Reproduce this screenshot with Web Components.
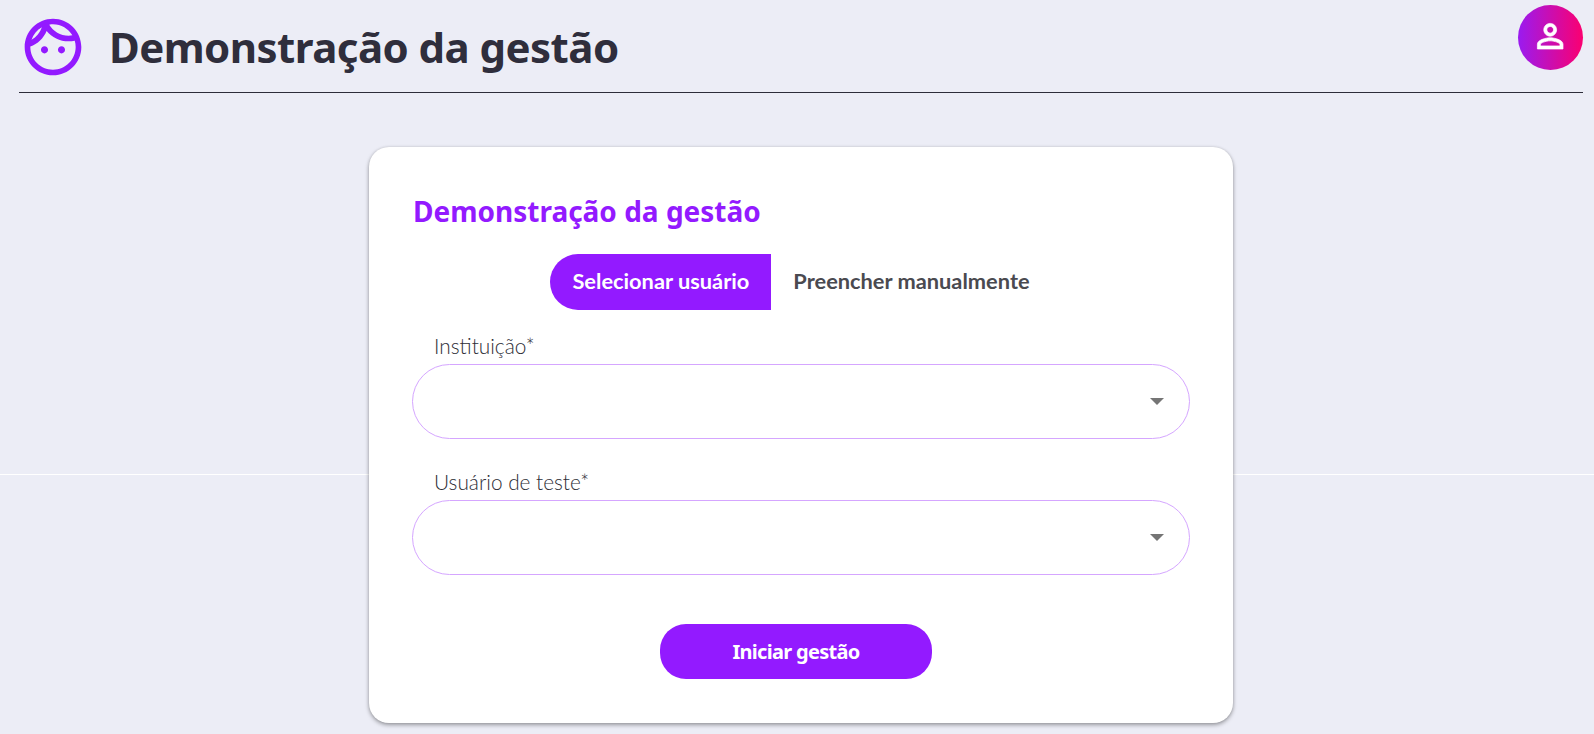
<!DOCTYPE html>
<html lang="pt-BR">
<head>
<meta charset="utf-8">
<title>Demonstração da gestão</title>
<style>
  html, body { margin: 0; height: 100%; }
  body {
    background: #ecedf6 linear-gradient(#fff, #fff) 0 474px / 100% 1px no-repeat;
    font-family: "Lato", "Liberation Sans", sans-serif;
    overflow: hidden;
  }
</style>
</head>
<body>
<app-header>Demonstração da gestão</app-header>
<demo-card>
  <span slot="title">Demonstração da gestão</span>
  <tab-switch></tab-switch>
  <select-field label="Instituição*"></select-field>
  <select-field label="Usuário de teste*"></select-field>
  <start-button>Iniciar gestão</start-button>
</demo-card>

<script>
  class AppHeader extends HTMLElement {
    constructor() {
      super();
      this.attachShadow({ mode: "open" });
      this.shadowRoot.innerHTML = `
        <style>
          :host { display: block; height: 93px; box-sizing: border-box; margin: 0 11px 0 19px; border-bottom: 1px solid #2d2d3a; }
          .row { display: flex; align-items: flex-start; }
          .face { width: 68px; height: 68px; margin-top: 13px; flex: none; fill: #931aff; }
          h1 {
            margin: 19px 0 0 22px; flex: 1;
            font: 700 42px/55px "Noto Sans", sans-serif;
            letter-spacing: -0.55px;
            color: #2f2e3c;
          }
          .avatar {
            width: 65px; height: 65px; margin-top: 5px; border-radius: 50%; flex: none;
            background: linear-gradient(90deg, #9a1bf0, #fb0070);
            display: flex; align-items: center; justify-content: center;
          }
          .avatar svg { width: 38.4px; height: 38.4px; margin-bottom: 3px; fill: #fff; stroke: #fff; stroke-width: .45; }
        </style>
        <div class="row">
          <svg class="face" viewBox="0 0 24 24">
            <path d="M10.250 13c0 .69-.56 1.250-1.250 1.250S7.750 13.690 7.750 13s.56-1.250 1.250-1.250 1.250.56 1.250 1.250zM15 11.750c-.69 0-1.250.56-1.250 1.250s.56 1.250 1.250 1.250 1.250-.56 1.250-1.250-.56-1.250-1.250-1.250zm7 .25c0 5.520-4.480 10-10 10S2 17.520 2 12 6.480 2 12 2s10 4.480 10 10zM10.660 4.120C12.060 6.440 14.600 8 17.500 8c.46 0 .91-.05 1.340-.12C17.440 5.560 14.900 4 12 4c-.46 0-.91.05-1.340.12zM4.420 9.470c1.710-.97 3.030-2.550 3.660-4.440C6.370 6 5.050 7.580 4.420 9.470zM20 12c0-.78-.12-1.530-.33-2.240-.7.15-1.420.24-2.170.24-3.130 0-5.920-1.440-7.760-3.690C8.690 8.860 6.580 10.870 4 11.860c.01.04 0 .09 0 .14 0 4.410 3.590 8 8 8s8-3.590 8-8z"/>
          </svg>
          <h1><slot></slot></h1>
          <div class="avatar">
            <svg viewBox="0 0 24 24">
              <path d="M12 5.900c1.160 0 2.100.94 2.100 2.100s-.94 2.100-2.100 2.100S9.900 9.160 9.900 8s.94-2.100 2.100-2.100m0 9c2.970 0 6.100 1.460 6.100 2.100v1.100H5.900V17c0-.64 3.130-2.100 6.100-2.100M12 4C9.790 4 8 5.790 8 8s1.790 4 4 4 4-1.790 4-4-1.790-4-4-4zm0 9c-2.670 0-8 1.340-8 4v3h16v-3c0-2.660-5.330-4-8-4z"/>
            </svg>
          </div>
        </div>`;
    }
  }

  class DemoCard extends HTMLElement {
    constructor() {
      super();
      this.attachShadow({ mode: "open" });
      this.shadowRoot.innerHTML = `
        <style>
          :host {
            display: block; box-sizing: border-box; width: 864px; height: 576px;
            margin: 54px 0 0 369px; padding: 44px 43px 0;
            background: #fff; border-radius: 20px;
            box-shadow: 0 2px 4px rgba(0,0,0,.35), 0 0 3px rgba(0,0,0,.1);
          }
          h2 { margin: 0 0 0 1px; font: 700 28px/40px "Noto Sans", sans-serif; letter-spacing: 0; color: #931aff; }
        </style>
        <h2><slot name="title"></slot></h2>
        <slot></slot>`;
    }
  }

  class TabSwitch extends HTMLElement {
    constructor() {
      super();
      this.attachShadow({ mode: "open" });
      this.shadowRoot.innerHTML = `
        <style>
          :host { display: flex; justify-content: center; margin: 23px 0 21px; font: 700 21.8px/54px "Lato", sans-serif; }
          div { height: 56px; padding: 0 22px; box-sizing: border-box; }
          .on { background: #931aff; color: #fff; border-radius: 28px 0 0 28px; }
          .off { color: #4a4a50; }
        </style>
        <div class="on">Selecionar usuário</div>
        <div class="off">Preencher manualmente</div>`;
    }
  }

  class SelectField extends HTMLElement {
    constructor() {
      super();
      this.attachShadow({ mode: "open" });
      this.shadowRoot.innerHTML = `
        <style>
          :host { display: block; margin-bottom: 28px; }
          label { display: block; padding-left: 22px; font: 300 20.8px/30px "Lato", sans-serif; color: #2e2e36; margin-bottom: 3px; }
          .box {
            height: 75px; box-sizing: border-box; width: 778px;
            border: 1px solid #d5a6ff; border-radius: 38px;
            display: flex; align-items: center; justify-content: flex-end; padding-right: 25px;
          }
          .arrow { width: 0; height: 0; border: 7px solid transparent; border-top-color: #757575; border-bottom: 0; }
        </style>
        <label></label>
        <div class="box"><span class="arrow"></span></div>`;
      this.shadowRoot.querySelector("label").textContent = this.getAttribute("label");
    }
  }

  class StartButton extends HTMLElement {
    constructor() {
      super();
      this.attachShadow({ mode: "open" });
      this.shadowRoot.innerHTML = `
        <style>
          :host { display: block; width: 272px; height: 55px; margin: 49px 0 0 248px; border-radius: 26px;
            background: #931aff; color: #fff; text-align: center; font: 700 20px/55px "Noto Sans", sans-serif; letter-spacing: -0.7px; }
        </style>
        <slot></slot>`;
    }
  }

  customElements.define("app-header", AppHeader);
  customElements.define("demo-card", DemoCard);
  customElements.define("tab-switch", TabSwitch);
  customElements.define("select-field", SelectField);
  customElements.define("start-button", StartButton);
</script>
</body>
</html>
